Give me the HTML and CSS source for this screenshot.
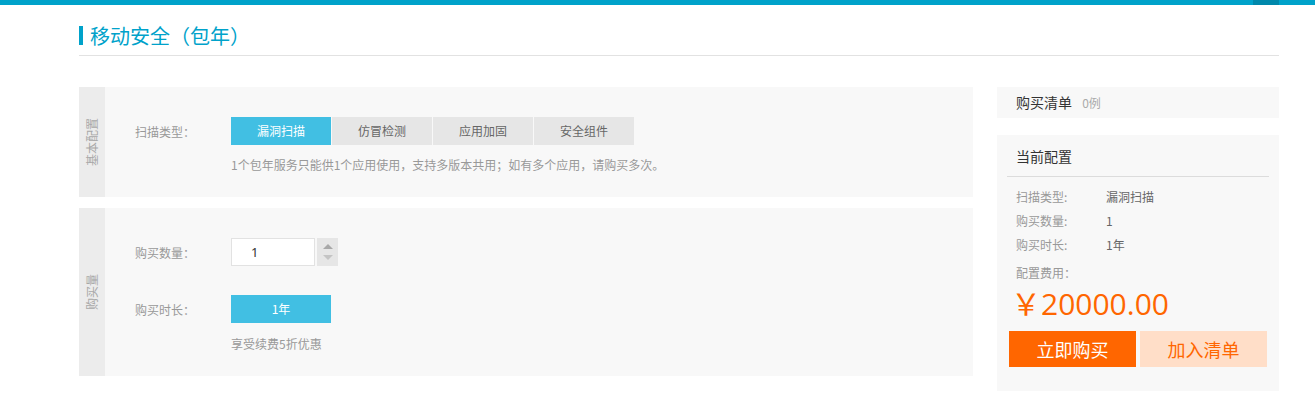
FILE: index.html
```html
<!DOCTYPE html>
<html lang="zh-CN">
<head>
    <meta charset="UTF-8">
    <title>移动安全（包年）</title>
    <link rel="stylesheet" href="styles.css">
</head>
<body>
    <div class="topbar"><span class="topbar-tab"></span></div>

    <div class="page">
        <h1 class="page-title">移动安全（包年）</h1>

        <div class="main">
            <div class="left">

                <div class="card">
                    <div class="card-side"><span>基本配置</span></div>
                    <div class="card-body">
                        <div class="row">
                            <label>扫描类型：</label>
                            <div class="tabs">
                                <span class="tab active">漏洞扫描</span>
                                <span class="tab">仿冒检测</span>
                                <span class="tab">应用加固</span>
                                <span class="tab">安全组件</span>
                            </div>
                        </div>
                        <p class="note">1个包年服务只能供1个应用使用，支持多版本共用；如有多个应用，请购买多次。</p>
                    </div>
                </div>

                <div class="card card-2">
                    <div class="card-side"><span>购买量</span></div>
                    <div class="card-body">
                        <div class="row">
                            <label>购买数量：</label>
                            <div class="num">
                                <input type="text" value="1">
                                <span class="spin">
                                    <svg width="12" height="18" viewBox="0 0 12 18">
                                        <path d="M1 6 L6 1 L11 6 Z" fill="#a8a8a8"/>
                                        <path d="M1 12 L6 17 L11 12 Z" fill="#c4c4c4"/>
                                    </svg>
                                </span>
                            </div>
                        </div>
                        <div class="row row-gap">
                            <label>购买时长：</label>
                            <div class="tabs">
                                <span class="tab active">1年</span>
                            </div>
                        </div>
                        <p class="note">享受续费5折优惠</p>
                    </div>
                </div>

            </div>

            <div class="right">
                <div class="cart">
                    购买清单 <span>0例</span>
                </div>
                <div class="config">
                    <div class="config-title">当前配置</div>
                    <ul class="config-list">
                        <li><em>扫描类型:</em>漏洞扫描</li>
                        <li><em>购买数量:</em>1</li>
                        <li><em>购买时长:</em>1年</li>
                    </ul>
                    <div class="fee">配置费用：</div>
                    <div class="price">￥20000.00</div>
                    <div class="btns">
                        <span class="btn buy">立即购买</span>
                        <span class="btn add">加入清单</span>
                    </div>
                </div>
            </div>
        </div>
    </div>
</body>
</html>
```

FILE: styles.css
```css
*{
    margin: 0;
    padding: 0;
    box-sizing: border-box;
}
body{
    background: #fff;
    font-family: "Noto Sans CJK SC", "Liberation Sans", sans-serif;
    font-size: 12px;
    color: #666;
}
.topbar{
    height: 5px;
    background: #00a2ca;
    display: flex;
}
.topbar-tab{
    width: 26px;
    margin-left: 1253px;
    background: #0088ab;
}
.page{
    width: 1200px;
    margin-left: 79px;
}
.page-title{
    margin-top: 20px;
    height: 31px;
    border-bottom: 1px solid #e2e2e2;
    display: flex;
    align-items: flex-start;
    font-size: 20px;
    font-weight: normal;
    line-height: 22px;
    color: #00a2ca;
    padding-left: 11px;
    position: relative;
}
.page-title::before{
    content: "";
    position: absolute;
    left: 0;
    top: 1px;
    width: 4px;
    height: 19px;
    background: #00a2ca;
}
.main{
    display: flex;
    gap: 24px;
    margin-top: 31px;
}
.left{
    width: 894px;
    display: flex;
    flex-direction: column;
    gap: 11px;
}
.card{
    display: flex;
    background: #f8f8f8;
    height: 110px;
}
.card-2{
    height: 168px;
}
.card-side{
    width: 26px;
    background: #ececec;
    display: flex;
    align-items: center;
    justify-content: center;
}
.card-side span{
    writing-mode: vertical-rl;
    text-orientation: sideways;
    transform: rotate(180deg);
    font-size: 12px;
    color: #a8a8a8;
    line-height: 14px;
}
.card-body{
    padding: 30px 0 0 30px;
}
.row{
    display: flex;
    align-items: center;
    height: 28px;
}
.row-gap{
    margin-top: 29px;
}
.row label{
    width: 96px;
    color: #999;
}
.tabs{
    display: flex;
    gap: 1px;
}
.tab{
    width: 100px;
    height: 28px;
    line-height: 28px;
    text-align: center;
    background: #e6e6e6;
    color: #666;
}
.tab.active{
    background: #41bfe3;
    color: #fff;
}
.note{
    margin: 10px 0 0 96px;
    line-height: 20px;
    color: #999;
}
.card-2 .note{
    margin-top: 11px;
}
.num{
    display: flex;
    gap: 2px;
}
.num input{
    width: 84px;
    height: 28px;
    border: 1px solid #e2e2e2;
    background: #fff;
    outline: none;
    padding-left: 19px;
    font-family: "Noto Sans", "Liberation Sans", sans-serif;
    font-size: 13px;
    color: #333;
}
.spin{
    width: 21px;
    height: 28px;
    background: #e6e6e6;
    display: flex;
    align-items: center;
    justify-content: center;
}
.right{
    width: 282px;
    display: flex;
    flex-direction: column;
    gap: 17px;
}
.cart{
    height: 31px;
    background: #f8f8f8;
    padding-left: 19px;
    line-height: 31px;
    font-size: 14px;
    color: #333;
}
.cart span{
    font-size: 12px;
    color: #aaa;
    margin-left: 7px;
}
.config{
    background: #f8f8f8;
    height: 256px;
}
.config-title{
    margin: 0 10px;
    height: 42px;
    line-height: 42px;
    padding-left: 9px;
    border-bottom: 1px solid #dcdcdc;
    font-size: 14px;
    color: #333;
}
.config-list{
    list-style: none;
    margin-top: 8px;
    padding-left: 19px;
}
.config-list li{
    line-height: 24px;
    color: #666;
}
.config-list em{
    font-style: normal;
    display: inline-block;
    width: 90px;
    color: #999;
}
.fee{
    padding-left: 19px;
    line-height: 24px;
    margin-top: 4px;
    color: #999;
}
.price{
    padding-left: 14px;
    font-size: 30px;
    line-height: 36px;
    color: #ff6600;
    font-family: "Open Sans", "Noto Sans CJK SC", sans-serif;
    margin-top: 1px;
}
.btns{
    display: flex;
    gap: 4px;
    padding-left: 12px;
    margin-top: 9px;
}
.btn{
    width: 127px;
    height: 36px;
    line-height: 36px;
    text-align: center;
    font-size: 18px;
}
.buy{
    background: #ff6600;
    color: #fff;
}
.add{
    background: #ffdec8;
    color: #ff6600;
}
```
